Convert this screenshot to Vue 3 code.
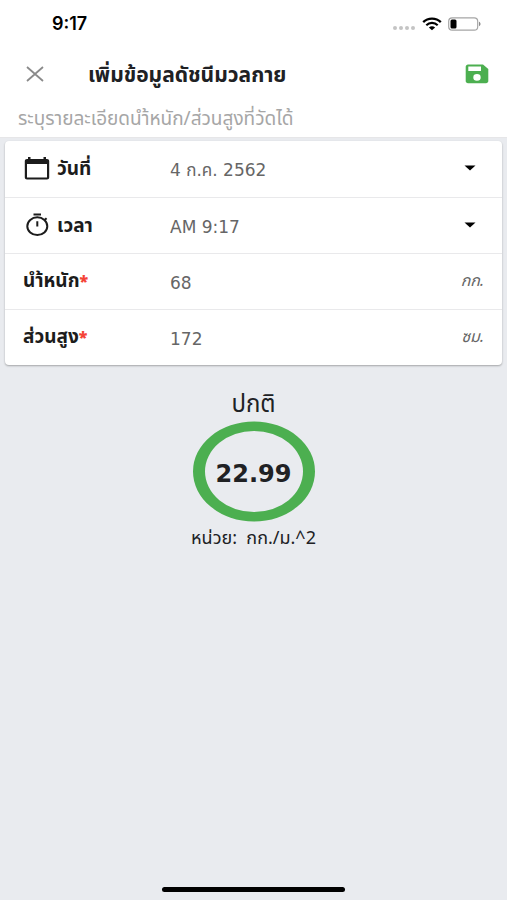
<script setup>
import { ref, computed } from 'vue'

const date = ref('4 ก.ค. 2562')
const time = ref('AM 9:17')
const weight = ref('68')
const height = ref('172')

const bmi = computed(() => {
  const metres = Number(height.value) / 100
  return metres > 0 ? (Number(weight.value) / (metres * metres)).toFixed(2) : '-'
})
</script>

<template>
  <div class="screen">
    <header class="top">
      <div class="status">
        <span class="clock">9:17</span>
        <div class="signals">
          <svg class="dots" width="24" height="14" viewBox="0 0 24 14" aria-hidden="true">
            <circle cx="3" cy="11" r="2" /><circle cx="9" cy="11" r="2" />
            <circle cx="15" cy="11" r="2" /><circle cx="21" cy="11" r="2" />
          </svg>
          <svg width="20" height="14" viewBox="0 0 20 14" aria-hidden="true">
            <path d="M1.2 5.1C6 .5 14 .5 18.800 5.100" fill="none" stroke="#000" stroke-width="2.400" />
            <path d="M4.300 8.200C7.500 5.200 12.500 5.200 15.700 8.200" fill="none" stroke="#000" stroke-width="2.200" />
            <path d="M6.900 10.500C8.600 8.900 11.400 8.900 13.100 10.500L10 13.200Z" />
          </svg>
          <svg width="33" height="14" viewBox="0 0 33 14" aria-hidden="true">
            <rect x=".7" y=".8" width="29" height="12.400" rx="3.500" fill="none" stroke="#a5a5a5" stroke-width="1.200" />
            <rect x="2.500" y="2.600" width="6" height="8.800" rx="1.500" />
            <path d="M31 4.800C33 5.500 33 8.500 31 9.200Z" fill="#8c8c8c" />
          </svg>
        </div>
      </div>
      <div class="bar">
        <button class="icon-button" type="button" aria-label="ปิด">
          <svg width="18" height="16" viewBox="0 0 18 16"><path d="M1 1L17 15M17 1L1 15" stroke="#8a8a8a" stroke-width="1.800" fill="none" /></svg>
        </button>
        <h1>เพิ่มข้อมูลดัชนีมวลกาย</h1>
        <button class="icon-button" type="button" aria-label="บันทึก">
          <svg width="24" height="20" viewBox="0 0 24 20">
            <path fill="#4caf50" fill-rule="evenodd" d="M3 .5H18L23.300 5V17C23.300 18.300 22.300 19.200 21 19.200H3C1.700 19.200.7 18.300.7 17V2.800C.7 1.500 1.700.5 3 .5ZM3.300 2.600V6.900H16V2.600ZM12 10.100A3.700 3.300 0 1 0 12 16.700A3.700 3.300 0 1 0 12 10.100Z" />
          </svg>
        </button>
      </div>
      <p class="hint">ระบุรายละเอียดนำ้หนัก/ส่วนสูงที่วัดได้</p>
    </header>

    <main>
      <form class="card" @submit.prevent>
        <div class="row">
          <label for="date">
            <svg width="27" height="24" viewBox="0 0 27 24" aria-hidden="true">
              <path fill="#1c1c1c" fill-rule="evenodd" d="M5 1H7.500V3H20.500V1H23V3H24C25.300 3 26.200 3.800 26.200 5V21.500C26.200 22.700 25.300 23.500 24 23.500H4C2.700 23.500 1.800 22.700 1.800 21.500V5C1.800 3.800 2.700 3 4 3H5ZM4 8V21.500H24V8Z" />
            </svg>
            วันที่
          </label>
          <select id="date" v-model="date"><option>4 ก.ค. 2562</option></select>
          <svg class="caret" width="12" height="6" viewBox="0 0 12 6" aria-hidden="true"><path d="M.5 .5H11.500L6 5.500Z" /></svg>
        </div>
        <div class="row">
          <label for="time">
            <svg width="27" height="24" viewBox="0 0 27 24" aria-hidden="true">
              <path d="M10.500 1.600H18M14.300 8.200V13.500M21.800 6.800L23.600 5.200" fill="none" stroke="#1c1c1c" stroke-width="2" />
              <ellipse cx="14.300" cy="13.200" rx="10" ry="8.900" fill="none" stroke="#1c1c1c" stroke-width="2" />
            </svg>
            เวลา
          </label>
          <select id="time" v-model="time"><option>AM 9:17</option></select>
          <svg class="caret" width="12" height="6" viewBox="0 0 12 6" aria-hidden="true"><path d="M.5 .5H11.500L6 5.500Z" /></svg>
        </div>
        <div class="row">
          <label for="weight"><span>นำ้หนัก<b>*</b></span></label>
          <input id="weight" v-model="weight" type="text" inputmode="decimal" />
          <span class="unit">กก.</span>
        </div>
        <div class="row">
          <label for="height"><span>ส่วนสูง<b>*</b></span></label>
          <input id="height" v-model="height" type="text" inputmode="decimal" />
          <span class="unit">ซม.</span>
        </div>
      </form>

      <section class="result">
        <p class="level">ปกติ</p>
        <div class="ring">
          <svg width="124" height="102" viewBox="0 0 124 102" aria-hidden="true">
            <path fill="#4caf50" fill-rule="evenodd" d="M1 50.500A61 50 0 1 1 123 50.500A61 50 0 1 1 1 50.500ZM13 50.500A49 40.500 0 1 0 111 50.500A49 40.500 0 1 0 13 50.500Z" />
          </svg>
          <strong>{{ bmi }}</strong>
        </div>
        <p class="measure">หน่วย:&nbsp; กก./ม.^2</p>
      </section>
    </main>

    <footer><div class="home"></div></footer>
  </div>
</template>

<style>
body {
  background: #e9ebef;
}
</style>

<style scoped>
.screen {
  min-height: 100vh;
  display: flex;
  flex-direction: column;
  color: #202124;
  background: #e9ebef;
  font-family: "Noto Sans", "Noto Sans Thai", "Open Sans", sans-serif;
}
h1, p {
  margin: 0;
}
.top {
  background: #fff;
  border-bottom: 1px solid #e6e6e8;
}
.status {
  display: flex;
  align-items: center;
  justify-content: space-between;
  height: 48px;
  padding: 0 26px 0 52px;
  color: #000;
}
.clock {
  font: 600 18px/24px Inter, sans-serif;
}
.signals {
  display: flex;
  align-items: center;
  gap: 6px;
}
.dots {
  fill: #c4c4c4;
}
.bar {
  display: flex;
  align-items: center;
  height: 52px;
  padding: 0 18px 0 26px;
}
.icon-button {
  display: flex;
  padding: 0;
  border: 0;
  background: none;
}
h1 {
  flex: 1;
  margin-left: 44px;
  font-size: 21px;
  line-height: 32px;
  font-weight: 700;
}
.hint {
  padding: 6px 18px;
  font-size: 19px;
  line-height: 25px;
  color: #a6a6a6;
}
.card {
  margin: 3px 5px 0;
  background: #fff;
  border-radius: 4px;
  box-shadow: 0 1px 2px rgba(0, 0, 0, 0.3);
}
.row {
  display: flex;
  align-items: center;
  height: 56px;
  padding: 0 18px;
  box-sizing: border-box;
}
.row + .row {
  border-top: 1px solid #e9e9eb;
}
label {
  display: flex;
  align-items: center;
  gap: 7px;
  flex: 0 0 147px;
  padding-bottom: 2px;
  font-size: 19px;
  line-height: 26px;
  font-weight: 700;
  color: #1c1c1c;
}
label b {
  color: #f44336;
  font-size: 16px;
}
select, input {
  flex: 1;
  min-width: 0;
  height: 30px;
  margin-top: 2px;
  padding: 0;
  border: 0;
  outline: 0;
  appearance: none;
  background: transparent;
  color: #666;
  font: 400 17px/30px "DejaVu Sans", "Noto Sans Thai", sans-serif;
}
.caret {
  margin-right: 8px;
  margin-bottom: 2px;
}
.unit {
  margin-bottom: 2px;
  font-size: 16px;
  font-style: italic;
  color: #666;
}
.result {
  display: flex;
  flex-direction: column;
  align-items: center;
  padding-top: 20px;
}
.level {
  font-size: 24px;
  line-height: 36px;
}
.ring {
  display: grid;
  place-items: center;
}
.ring > * {
  grid-area: 1 / 1;
}
.ring strong {
  padding-top: 4px;
  font: 700 24px/32px "DejaVu Sans", sans-serif;
}
.measure {
  font-size: 18px;
  line-height: 28px;
}
footer {
  display: flex;
  justify-content: center;
  margin-top: auto;
  padding-bottom: 8px;
}
.home {
  width: 36%;
  height: 5px;
  border-radius: 3px;
  background: #000;
}
</style>
